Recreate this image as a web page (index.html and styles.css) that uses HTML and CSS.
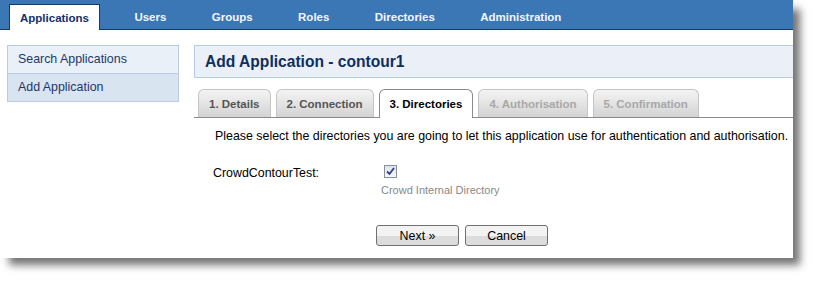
FILE: index.html
```html
<!DOCTYPE html>
<html lang="en">
<head>
    <meta charset="UTF-8">
    <title>Add Application - contour1</title>
    <link rel="stylesheet" href="styles.css">
</head>
<body>
    <div class="window">
        <div class="topnav">
            <a class="active" href="#">Applications</a>
            <a href="#">Users</a>
            <a href="#">Groups</a>
            <a href="#">Roles</a>
            <a href="#">Directories</a>
            <a href="#">Administration</a>
        </div>
        <div class="main">
            <ul class="sidebar">
                <li><a href="#">Search Applications</a></li>
                <li class="current"><a href="#">Add Application</a></li>
            </ul>
            <div class="content">
                <div class="header">
                    <h2>Add Application - contour1</h2>
                </div>
                <ul class="steps">
                    <li>1. Details</li>
                    <li>2. Connection</li>
                    <li class="on">3. Directories</li>
                    <li class="off">4. Authorisation</li>
                    <li class="off">5. Confirmation</li>
                </ul>
                <div class="panel">
                    <p>Please select the directories you are going to let this application use for authentication and authorisation.</p>
                    <div class="field">
                        <label>CrowdContourTest:</label>
                        <div class="value">
                            <span class="check">
                                <svg width="9" height="9" viewBox="0 0 9 9"><path d="M1 4.5 L3.5 7 L8 1" fill="none" stroke="#2a3f8f" stroke-width="1.8"/></svg>
                            </span>
                            <div class="desc">Crowd Internal Directory</div>
                        </div>
                    </div>
                    <div class="buttons">
                        <button>Next &raquo;</button>
                        <button>Cancel</button>
                    </div>
                </div>
            </div>
        </div>
    </div>
</body>
</html>
```

FILE: styles.css
```css
body{
    margin: 0;
    min-height: 281px;
    background: #fff;
    font-family: "Liberation Sans", Arial, sans-serif;
    font-size: 12.4px;
}
.window{
    width: 793px;
    height: 258px;
    background: #fff;
    overflow: hidden;
    box-shadow: 8px 8px 8px -1px rgba(0,0,0,0.55);
}
.topnav{
    height: 29px;
    background: #3b76b5;
    border-bottom: 1px solid #16396a;
    display: flex;
    align-items: flex-end;
    padding-left: 9px;
}
.topnav a{
    display: block;
    height: 25px;
    line-height: 27px;
    padding: 0 11px;
    margin-right: 23.4px;
    color: #f2f6fb;
    font-size: 11.5px;
    font-weight: bold;
    text-decoration: none;
    box-sizing: border-box;
}
.topnav a.active{
    background: #fff;
    color: #13306a;
    border: 1px solid #16396a;
    border-bottom: none;
    height: 26px;
    margin-bottom: -1px;
    padding: 0 10px;
}
.main{
    display: flex;
    align-items: flex-start;
}
.sidebar{
    list-style: none;
    margin: 15px 0 0 7px;
    padding: 0;
    width: 170px;
    border: 1px solid #b8cce4;
}
.sidebar li{
    height: 27px;
    line-height: 27px;
    padding-left: 10px;
    background: #eaf0f8;
}
.sidebar li + li{
    border-top: 1px solid #b8cce4;
}
.sidebar li.current{
    background: #d9e4f1;
}
.sidebar a{
    color: #1f3769;
    text-decoration: none;
}
.content{
    flex: 1;
    margin: 15px 0 0 15px;
}
.header{
    height: 31px;
    background: #ebf0f8;
    border: 1px solid #b6cce6;
    border-right: none;
    padding-left: 10px;
}
.header h2{
    margin: 0;
    font-size: 15.6px;
    line-height: 31px;
    color: #102e5e;
}
.steps{
    list-style: none;
    margin: 11px 0 0;
    padding: 0 0 0 4px;
    display: flex;
    gap: 5px;
    border-bottom: 1px solid #8a8a8a;
}
.steps li{
    height: 27px;
    line-height: 29px;
    padding: 0 10px;
    border: 1px solid #c4c4c4;
    border-bottom: none;
    border-radius: 6px 6px 0 0;
    background: linear-gradient(#f4f4f4, #d3d3d3);
    color: #555;
    font-size: 11.5px;
    font-weight: bold;
}
.steps li.on{
    background: #fff;
    color: #000;
    border-color: #8a8a8a;
    height: 28px;
    margin-bottom: -1px;
}
.steps li.off{
    color: #a8a8a8;
}
.panel p{
    margin: 11px 0 0 21px;
    color: #000;
}
.field{
    display: flex;
    margin: 17px 0 0 19px;
}
.field label{
    width: 168px;
    padding-top: 6px;
}
.value{
    padding-top: 5px;
}
.check{
    display: flex;
    align-items: center;
    justify-content: center;
    width: 11px;
    height: 11px;
    margin-left: 3px;
    border: 1px solid #8a8f99;
    background: linear-gradient(#dfe3ea, #f7f8fa);
}
.desc{
    margin-top: 6px;
    color: #888;
    font-size: 11px;
}
.buttons{
    margin: 29px 0 0 182px;
    display: flex;
    gap: 6px;
}
.buttons button{
    box-sizing: border-box;
    width: 83px;
    height: 21px;
    border: 1px solid #707070;
    border-radius: 3px;
    background: linear-gradient(#f3f3f3 50%, #dcdcdc 50%);
    font-family: "Liberation Sans", Arial, sans-serif;
    font-size: 12.4px;
    color: #000;
    padding: 0;
}
```
